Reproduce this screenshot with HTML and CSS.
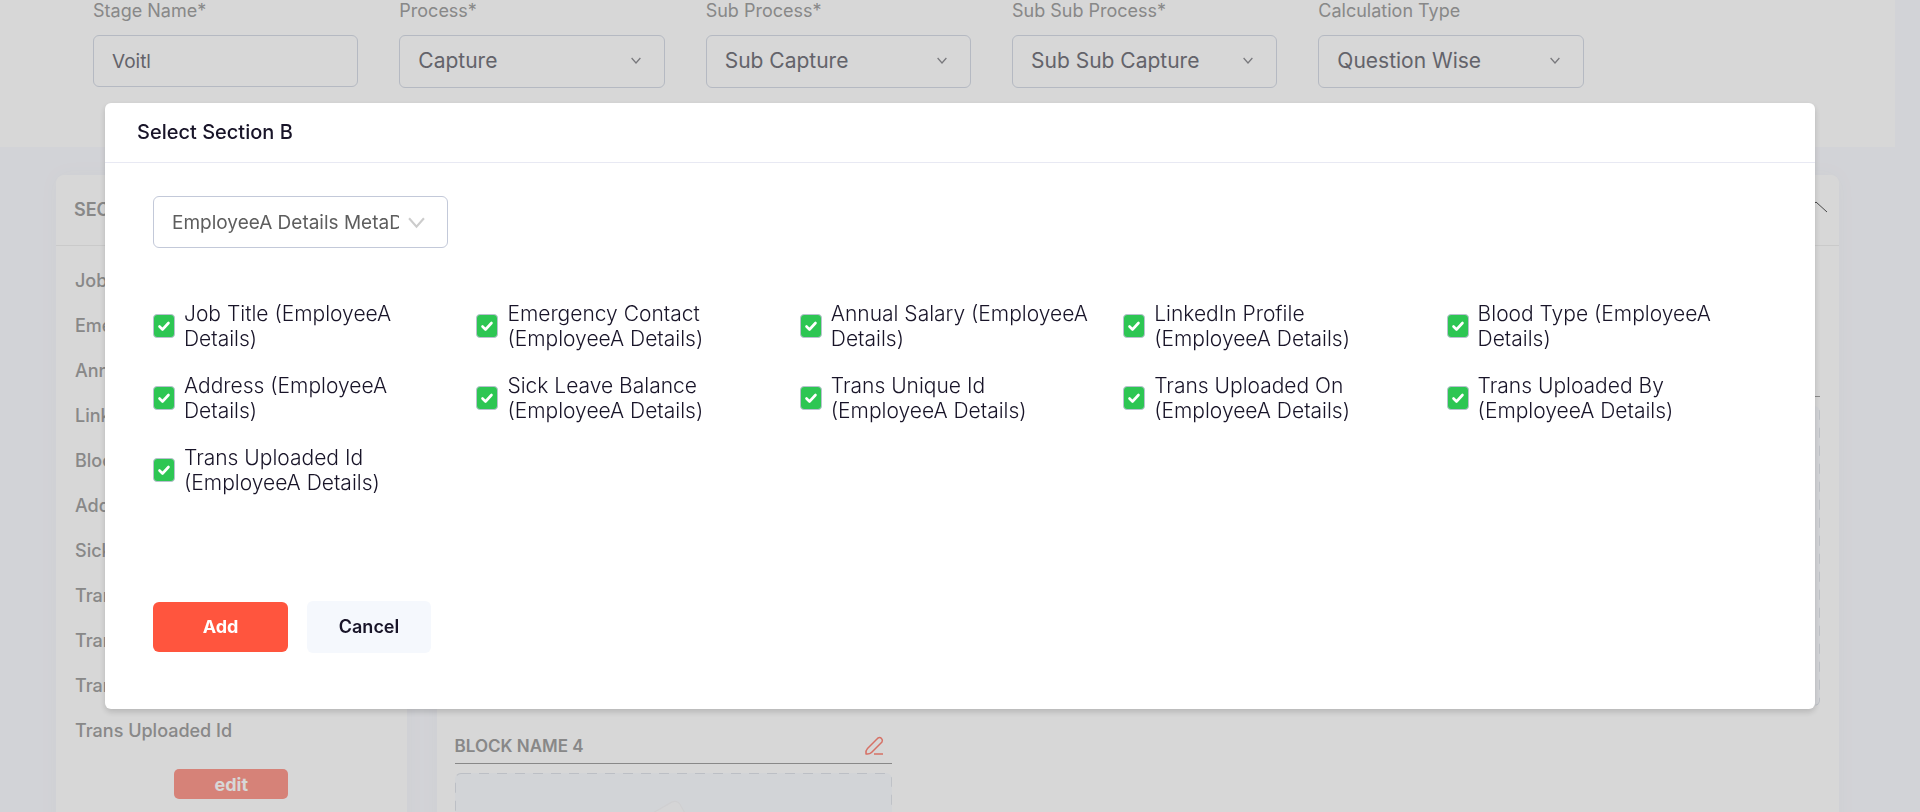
FILE: index.html
```html
<!DOCTYPE html>
<html lang="en">
<head>
<meta charset="utf-8">
<title>Select Section B</title>
<link rel="stylesheet" href="styles.css">
</head>
<body>
<svg class="sprite" aria-hidden="true">
  <symbol id="chevron" viewBox="0 0 16 16"><path d="M1 4l7 8 7-8" fill="none" stroke="currentColor" stroke-width="2"/></symbol>
  <symbol id="pencil" viewBox="0 0 20 20"><path d="M2 18q-.500-3.500 1.500-5.500L14 2q2-1 3.500.500T18 6L7.500 16.500Q5.500 18.500 2 18zM10 18h9" fill="none" stroke="currentColor" stroke-width="1.500" stroke-linejoin="round"/></symbol>
  <symbol id="page" viewBox="0 0 100 100"><rect x="20" y="14" width="56" height="76" rx="5" transform="rotate(-30 48 52)" fill="#fdfdfe" stroke="#f6f6f8"/></symbol>
</svg>
<div class="page">
  <form class="top-panel">
    <div class="field"><label for="stage">Stage Name*</label><div class="control"><input class="box" id="stage" type="text" value="Voitl"></div></div>
    <div class="field"><label for="process">Process*</label><div class="control"><select class="box large" id="process"><option>Capture</option></select><svg class="arrow"><use href="#chevron"/></svg></div></div>
    <div class="field"><label for="sub">Sub Process*</label><div class="control"><select class="box large" id="sub"><option>Sub Capture</option></select><svg class="arrow"><use href="#chevron"/></svg></div></div>
    <div class="field"><label for="subsub">Sub Sub Process*</label><div class="control"><select class="box large" id="subsub"><option>Sub Sub Capture</option></select><svg class="arrow"><use href="#chevron"/></svg></div></div>
    <div class="field"><label for="calc">Calculation Type</label><div class="control"><select class="box large" id="calc"><option>Question Wise</option></select><svg class="arrow"><use href="#chevron"/></svg></div></div>
  </form>
  <div class="columns">
    <section class="card side">
      <h2 class="card-head">SECTION B</h2>
      <ul class="names">
        <li>Job Title</li><li>Emergency Contact</li><li>Annual Salary</li><li>LinkedIn Profile</li><li>Blood Type</li><li>Address</li><li>Sick Leave Balance</li><li>Trans Unique Id</li><li>Trans Uploaded On</li><li>Trans Uploaded By</li><li>Trans Uploaded Id</li>
      </ul>
      <button class="edit" type="button">edit</button>
    </section>
    <section class="card main">
      <div class="card-head end"><svg class="collapse" viewBox="0 0 24 12"><path d="M1 11L12 1l11 10" fill="none" stroke="currentColor" stroke-width="1"/></svg></div>
      <div class="blocks">
        <div class="block first"><div class="block-head"></div><div class="drop"><svg class="dashes"><rect width="100%" height="100%" rx="6"/></svg></div></div>
        <div class="block first"><div class="block-head"></div><div class="drop"><svg class="dashes"><rect width="100%" height="100%" rx="6"/></svg></div></div>
        <div class="block first"><div class="block-head"></div><div class="drop"><svg class="dashes"><rect width="100%" height="100%" rx="6"/></svg></div></div>
        <div class="block"><div class="block-head"><h3>BLOCK NAME 4</h3><svg class="pencil"><use href="#pencil"/></svg></div><div class="drop"><svg class="dashes"><rect width="100%" height="100%" rx="6"/></svg><svg class="page-art"><use href="#page"/></svg></div></div>
      </div>
    </section>
  </div>
</div>
<div class="overlay">
  <div class="modal" role="dialog" aria-labelledby="modal-title">
    <h1 class="modal-head" id="modal-title">Select Section B</h1>
    <form class="modal-body">
      <div class="control meta"><select class="box" aria-label="Metadata"><option>EmployeeA Details MetaData</option></select><svg class="arrow"><use href="#chevron"/></svg></div>
      <div class="checks">
        <label><input type="checkbox" checked><span>Job Title (EmployeeA Details)</span></label>
        <label><input type="checkbox" checked><span>Emergency Contact (EmployeeA Details)</span></label>
        <label><input type="checkbox" checked><span>Annual Salary (EmployeeA Details)</span></label>
        <label><input type="checkbox" checked><span>LinkedIn Profile (EmployeeA Details)</span></label>
        <label><input type="checkbox" checked><span>Blood Type (EmployeeA Details)</span></label>
        <label><input type="checkbox" checked><span>Address (EmployeeA Details)</span></label>
        <label><input type="checkbox" checked><span>Sick Leave Balance (EmployeeA Details)</span></label>
        <label><input type="checkbox" checked><span>Trans Unique Id (EmployeeA Details)</span></label>
        <label><input type="checkbox" checked><span>Trans Uploaded On (EmployeeA Details)</span></label>
        <label><input type="checkbox" checked><span>Trans Uploaded By (EmployeeA Details)</span></label>
        <label><input type="checkbox" checked><span>Trans Uploaded Id (EmployeeA Details)</span></label>
      </div>
      <div class="actions"><button class="add" type="button">Add</button><button class="cancel" type="button">Cancel</button></div>
    </form>
  </div>
</div>
</body>
</html>
```

FILE: styles.css
```css
* { box-sizing: border-box; }
body { margin: 0; height: 100vh; overflow: hidden; background: #fafbff; font-family: Inter, "Liberation Sans", sans-serif; }
h1, h2, h3, ul { margin: 0; padding: 0; list-style: none; }
button, input, select { font-family: inherit; margin: 0; }
.sprite { display: none; }
.page { height: 100vh; overflow: hidden; }

.top-panel { display: grid; grid-template-columns: repeat(6, 1fr); column-gap: 41px; align-items: start; height: 147px; margin-right: 25px; padding: 0 5px 0 93px; background: #fff; }
.field label { display: block; height: 35px; line-height: 22px; font-size: 18px; color: #a2a2a2; }
.control { position: relative; color: #8f8f94; }
.box { display: block; width: 100%; height: 52px; padding: 0 18px; border: 1px solid #d7dce7; border-radius: 6px; background: transparent; color: #76767e; font-size: 19px; appearance: none; outline: none; }
.box.large { height: 53px; padding-bottom: 2px; font-size: 21px; }
.arrow { position: absolute; right: 24px; top: 20px; width: 10px; height: 11px; pointer-events: none; }

.columns { display: grid; grid-template-columns: 1fr 4fr; column-gap: 30px; padding: 28px 81px 0 56px; }
.card { min-height: 700px; border-radius: 8px; background: #fff; box-shadow: 0 0 20px rgba(76, 87, 125, .04); }
.card-head { height: 71px; padding: 0 18px; border-bottom: 1px solid #f0f0f0; line-height: 70px; font-size: 18px; font-weight: 600; color: #a2a2a2; }
.card-head.end { display: flex; justify-content: flex-end; padding: 26px 11px 0; }
.collapse { width: 24px; height: 12px; color: #555; }
.names { padding: 12px 18px 0 19px; }
.names li { height: 45px; line-height: 45px; font-size: 18px; font-weight: 500; color: #a2a2a2; white-space: nowrap; }
.side { display: flex; flex-direction: column; }
.edit { align-self: center; width: 114px; height: 30px; margin-top: 16px; padding: 0; border: 0; border-radius: 5px; background: #fe9b8f; color: #fff; font-size: 18px; font-weight: 700; }
.blocks { display: grid; grid-template-columns: repeat(3, 1fr); gap: 26px 27px; padding: 0 19px 0 18px; }
.block { padding-top: 1px; }
.block.first { padding-top: 120px; }
.block-head { display: flex; align-items: center; justify-content: space-between; height: 31px; padding: 0 8px 4px 0; border-bottom: 1px solid #a2a2a2; }
.block h3 { font-size: 17px; font-weight: 600; color: #a2a2a2; }
.pencil { width: 20px; height: 20px; color: #fe8679; }
.drop { position: relative; height: 300px; margin-top: 9px; border-radius: 6px; background: #fafcff; text-align: center; overflow: hidden; }
.dashes { position: absolute; inset: 0; width: 100%; height: 100%; }
.dashes rect { fill: none; stroke: #dfe3ea; stroke-width: 2; stroke-dasharray: 10 8; }
.page-art { width: 120px; height: 120px; margin-top: 20px; }

.overlay { position: fixed; inset: 0; padding: 103px 105px; background: rgba(0, 0, 0, .157); }
.modal { border-radius: 6px; background: #fff; box-shadow: 0 3px 6px rgba(0, 0, 0, .16); }
.modal-head { height: 60px; padding: 0 32px; border-bottom: 1px solid #e8e9f3; line-height: 59px; font-size: 20px; font-weight: 500; color: #181428; }
.modal-body { padding: 33px 45px 56px 48px; }
.meta { width: 295px; color: #ccc; }
.meta .box { padding-right: 48px; border-color: #c3c9d9; color: #5e5e5e; }
.meta .arrow { right: 23px; top: 18px; width: 17px; height: 17px; stroke-width: 3; }
.checks { display: grid; grid-template-columns: repeat(5, 1fr); row-gap: 22px; margin-top: 53px; }
.checks label { display: flex; align-items: center; gap: 9px; padding-right: 27px; font-size: 21px; font-weight: 300; line-height: 25px; color: #181428; }
.checks input { flex: none; width: 22px; height: 24px; margin: 0; appearance: none; border: 1px solid #b9c1cf; border-radius: 4px; background: #2dc653 url("data:image/svg+xml,%3Csvg xmlns='http://www.w3.org/2000/svg' viewBox='0 0 20 20'%3E%3Cpath d='M5.500 10.500l3 3 6-6.500' fill='none' stroke='white' stroke-width='2.600' stroke-linecap='round' stroke-linejoin='round'/%3E%3C/svg%3E") center / 20px 20px no-repeat; }
.actions { display: flex; align-items: center; gap: 19px; margin-top: 106px; }
.actions button { padding: 0 0 2px; border: 0; border-radius: 6px; font-size: 18px; font-weight: 600; }
.actions .add { width: 135px; height: 50px; background: #ff553e; color: #fff; font-weight: 700; }
.actions .cancel { width: 124px; height: 52px; background: #f5f8fd; color: #181428; }
```
